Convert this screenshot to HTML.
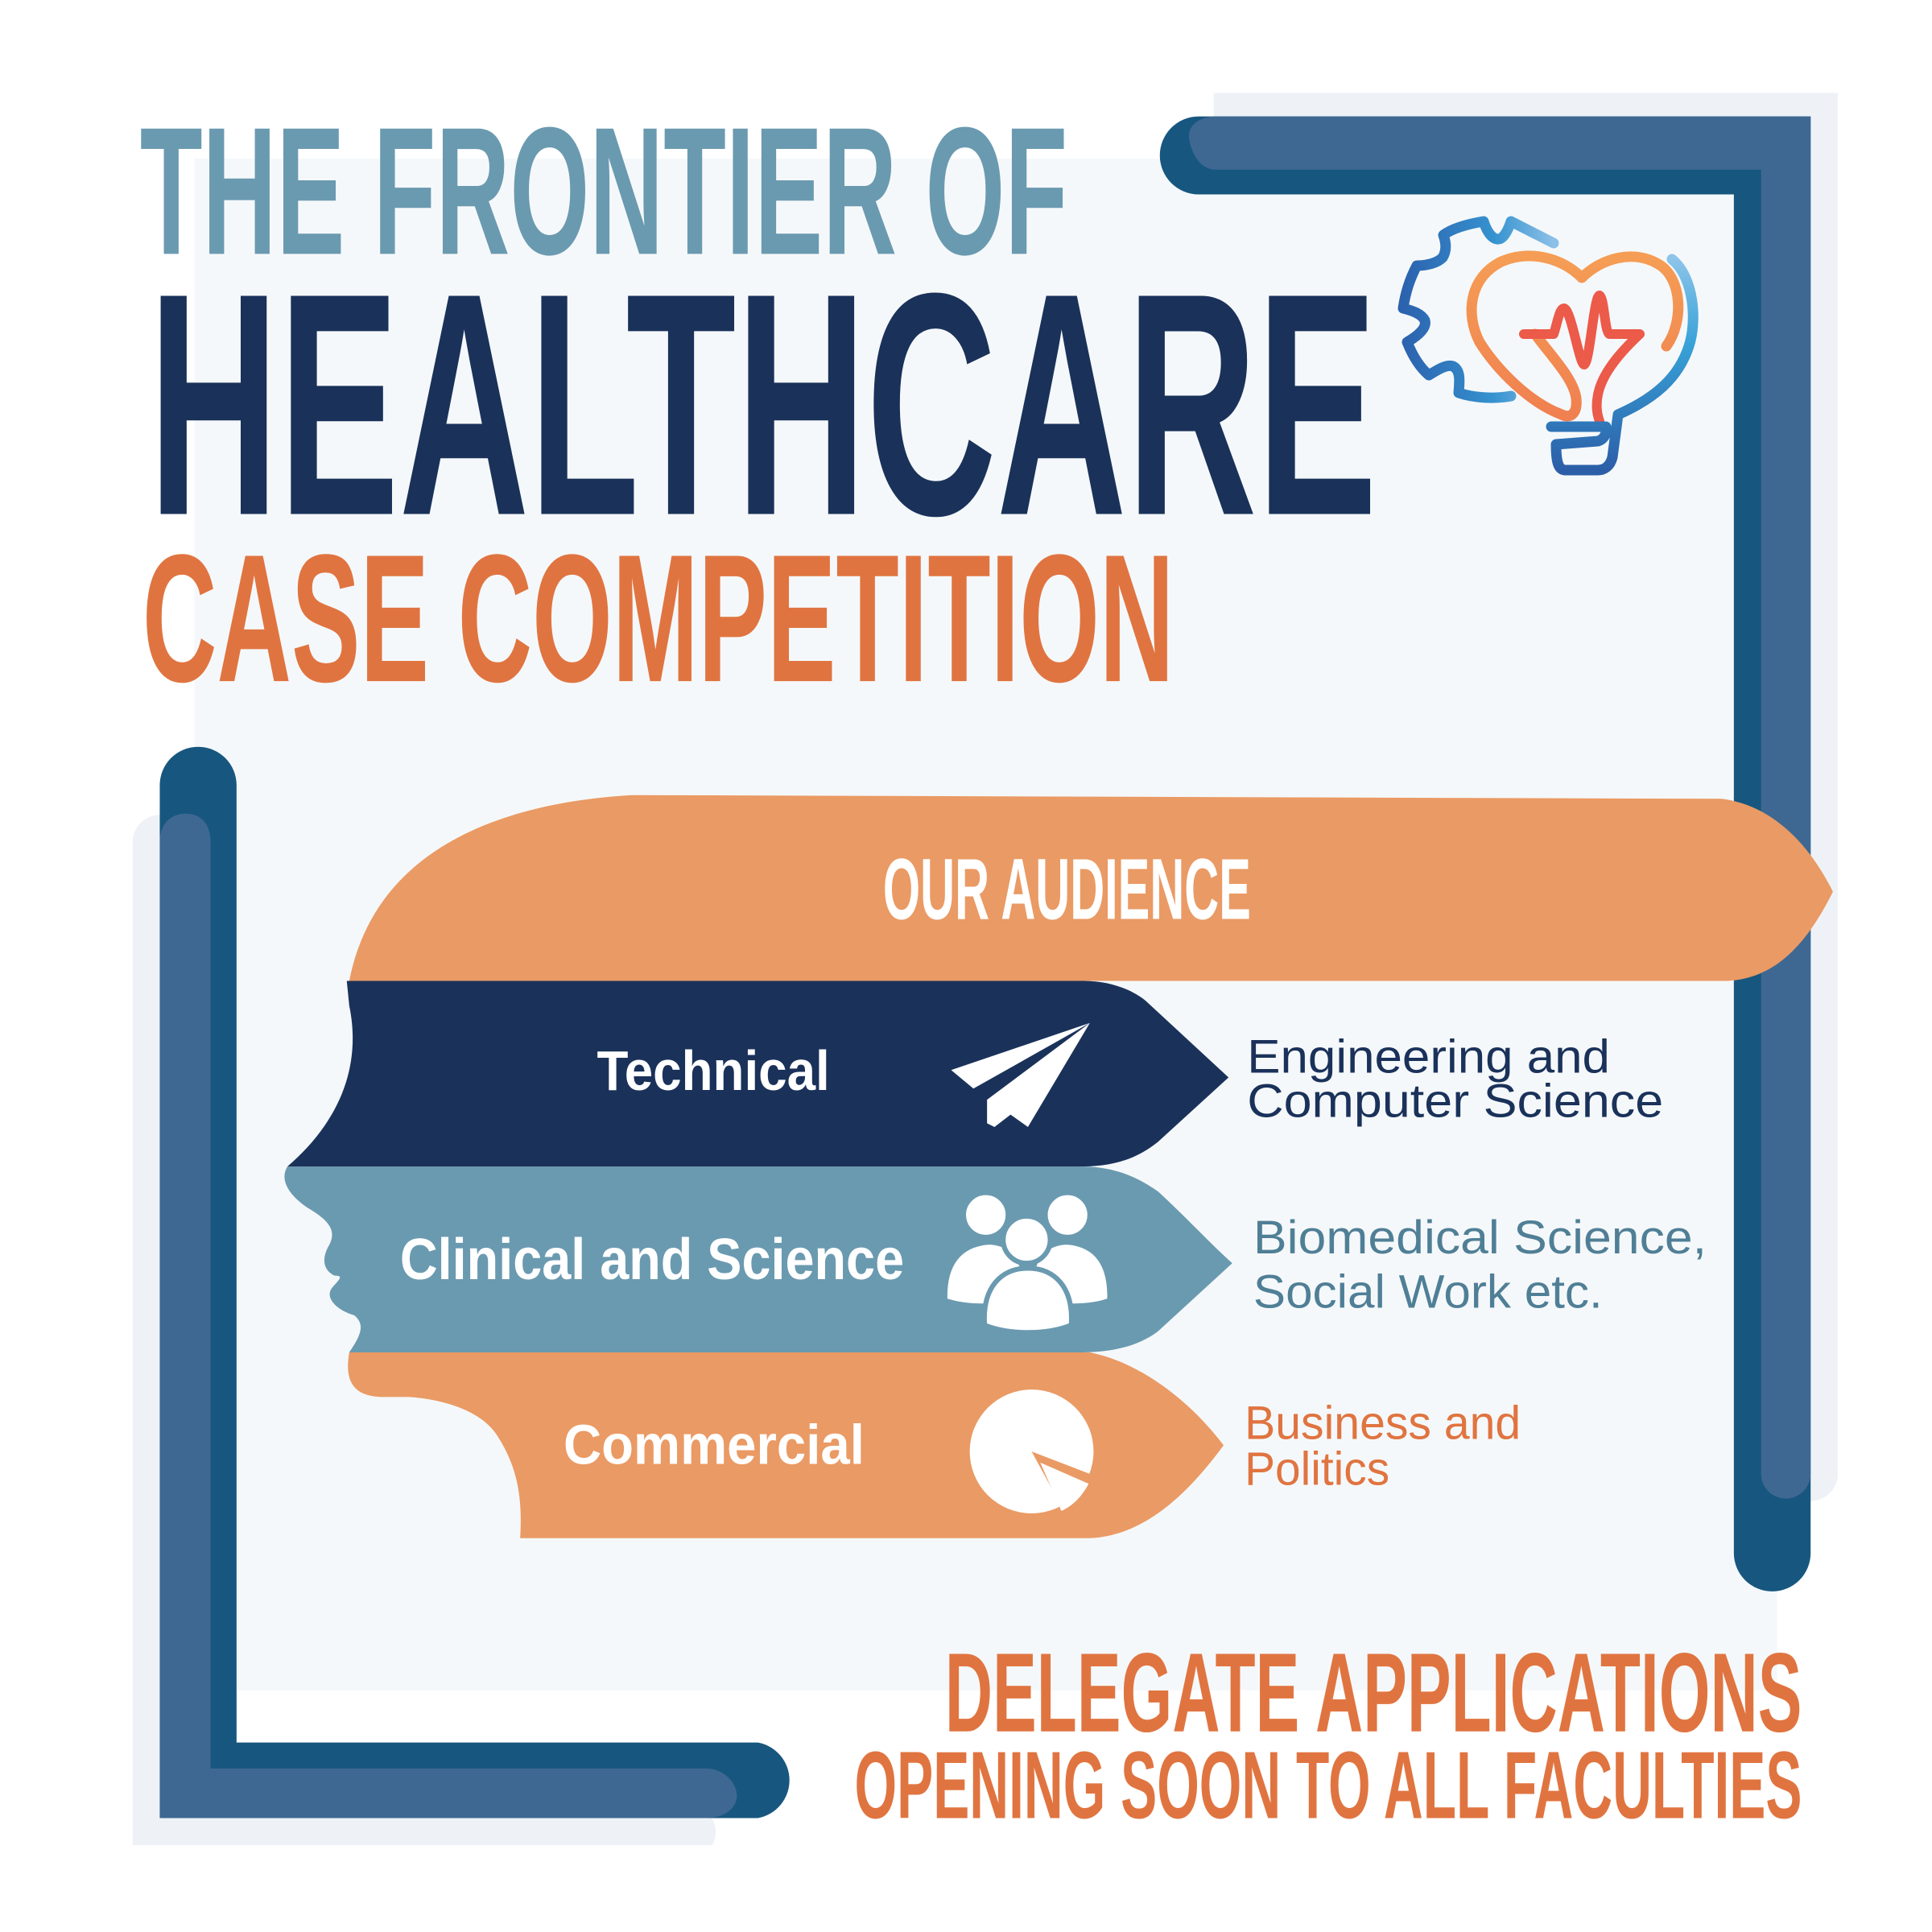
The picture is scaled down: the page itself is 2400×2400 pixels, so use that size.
<!DOCTYPE html>
<html><head><meta charset="utf-8"><style>
html,body{margin:0;padding:0;background:#fff;}
svg{display:block;}
</style></head><body>
<svg width="2400" height="2400" viewBox="0 0 2400 2400" xmlns="http://www.w3.org/2000/svg">
<defs>
<linearGradient id="gb" x1="0" y1="0" x2="1" y2="0"><stop offset="0" stop-color="#2c62ae"/><stop offset="0.6" stop-color="#3592cf"/><stop offset="1" stop-color="#8cc0e8"/></linearGradient>
<linearGradient id="gb2" x1="0" y1="0" x2="0" y2="1"><stop offset="0" stop-color="#8cc4ea"/><stop offset="0.4" stop-color="#38a2d8"/><stop offset="1" stop-color="#2c5ea8"/></linearGradient>
<linearGradient id="go" x1="0" y1="0" x2="0" y2="1"><stop offset="0" stop-color="#f59d55"/><stop offset="1" stop-color="#f08050"/></linearGradient>
</defs>
<rect width="2400" height="2400" fill="#fff"/>
<g transform="scale(1.538462)">
  <!-- light shadows -->
  <path d="M980,75 L1484,75 L1484,1190 A22,22 0 0 1 1440,1190 L1440,95 L980,95 Z" fill="#eef2f7"/>
  <path d="M107,680 A22,22 0 0 1 151,680 L151,1468 L575,1468 A22,22 0 0 1 575,1490 L107,1490 Z" fill="#eef2f7"/>
  <!-- panel -->
  <rect x="157" y="128" width="1278" height="1237" fill="#f5f8fa"/>
  <!-- top-right bracket -->
  <path d="M968,94 L1462,94 L1462,1254 A31,31 0 0 1 1400,1254 L1400,157 L968,157 A31,31 0 0 1 968,94 Z" fill="#17577f"/>
  <path d="M982,94 L1462,94 L1462,1190 A20,20 0 0 1 1422,1190 L1422,137 L982,137 C965,137 960,115 960,110 C960,100 970,94 982,94 Z" fill="#3e6892"/>
  <!-- bottom-left bracket -->
  <path d="M129,634 A31,31 0 0 1 191,634 L191,1407 L612,1407 A31,31 0 0 1 612,1468 L129,1468 Z" fill="#17577f"/>
  <path d="M129,680 C129,665 138,657 150,657 C162,657 170,665 170,680 L170,1428 L570,1428 C585,1428 595,1440 595,1450 C595,1460 585,1468 570,1468 L129,1468 Z" fill="#3e6892"/>

  <!-- titles -->
  <text x="113" y="205" font-family="Liberation Sans, sans-serif" font-weight="bold" font-size="147" fill="#6a9ab0" textLength="749" lengthAdjust="spacingAndGlyphs">THE FRONTIER OF</text>
  <text x="120" y="415" font-family="Liberation Sans, sans-serif" font-weight="bold" font-size="256" fill="#1a325a" textLength="992" lengthAdjust="spacingAndGlyphs">HEALTHCARE</text>
  <text x="115" y="550" font-family="Liberation Sans, sans-serif" font-weight="bold" font-size="147" fill="#e07440" textLength="833" lengthAdjust="spacingAndGlyphs">CASE COMPETITION</text>

  <!-- banner -->
  <path d="M282,792 C300,700 380,650 510,642 L1390,645 C1430,650 1460,680 1480,720 C1460,760 1435,790 1395,792 Z" fill="#ea9a64"/>
  <text x="713" y="742" font-family="Liberation Sans, sans-serif" font-weight="bold" font-size="70" fill="#fff" textLength="297" lengthAdjust="spacingAndGlyphs">OUR AUDIENCE</text>

  <!-- technical -->
  <path d="M280,792 L875,792 C898,792 915,800 925,808 L992,870 L935,922 C915,938 895,942 870,942 L232,942 C275,905 292,860 282,812 Z" fill="#1a325a"/>
  <text x="482" y="880" font-family="Liberation Sans, sans-serif" font-weight="bold" font-size="45" fill="#fff" textLength="188" lengthAdjust="spacingAndGlyphs">Technical</text>
  <path d="M768,864 L880,826 L786,879 Z M880,826 L830,910 L816,900 L803,910 L797,907 L797,888 Z" fill="#fff"/>

  <!-- clinical -->
  <path d="M232,942 L875,942 C905,942 925,955 935,962 C960,985 975,1002 995,1020 L935,1075 C915,1090 890,1092 870,1092 L282,1092 C290,1080 296,1070 286,1062 C272,1058 262,1048 268,1040 C274,1033 278,1030 270,1030 C260,1025 260,1015 266,1005 C272,993 265,985 248,975 C232,964 226,952 232,942 Z" fill="#6a9ab0"/>
  <text x="323" y="1033" font-family="Liberation Sans, sans-serif" font-weight="bold" font-size="47" fill="#fff" textLength="407" lengthAdjust="spacingAndGlyphs">Clinical and Science</text>
  <g fill="#fff" stroke="#6a9ab0" stroke-width="4">
    <path d="M763,1050 C762,1020 775,1005 798,1003 C815,1003 825,1015 827,1030 L827,1050 C805,1056 780,1056 763,1050 Z"/>
    <path d="M833,1050 L833,1030 C835,1015 845,1003 862,1003 C885,1005 897,1020 896,1050 C880,1056 855,1056 833,1050 Z"/>
    <circle cx="796" cy="981" r="18"/>
    <circle cx="862" cy="981" r="18"/>
    <path d="M795,1070 C793,1040 808,1024 830,1024 C852,1024 867,1040 865,1070 C845,1078 815,1078 795,1070 Z"/>
    <circle cx="829" cy="1001" r="19"/>
  </g>

  <!-- commercial -->
  <path d="M282,1092 L880,1092 C920,1100 960,1130 988,1167 C960,1205 925,1240 880,1242 L420,1242 C422,1210 418,1185 402,1160 C390,1140 360,1130 330,1128 L310,1128 C285,1128 278,1115 282,1092 Z" fill="#ea9a64"/>
  <text x="455" y="1182" font-family="Liberation Sans, sans-serif" font-weight="bold" font-size="45" fill="#fff" textLength="243" lengthAdjust="spacingAndGlyphs">Commercial</text>
  <circle cx="833" cy="1172" r="50" fill="#fff"/>
  <path d="M833,1172 L885,1192 A50,50 0 0 1 858,1218 Z" fill="#ea9a64"/>
  <path d="M840,1181 L879,1198 C874,1208 866,1216 857,1220 Z" fill="#fff"/>

  <!-- right text -->
  <g font-family="Liberation Sans, sans-serif" font-size="38">
    <text x="1007" y="866" fill="#1a325a" textLength="293" lengthAdjust="spacingAndGlyphs">Engineering and</text>
    <text x="1007" y="902" fill="#1a325a" textLength="336" lengthAdjust="spacingAndGlyphs">Computer Science</text>
    <text x="1012" y="1012" fill="#4f7f96" textLength="366" lengthAdjust="spacingAndGlyphs">Biomedical Science,</text>
    <text x="1012" y="1056" fill="#4f7f96" textLength="282" lengthAdjust="spacingAndGlyphs">Social Work etc.</text>
    <text x="1005" y="1162" fill="#e07440" textLength="223" lengthAdjust="spacingAndGlyphs">Business and</text>
    <text x="1005" y="1199" fill="#e07440" textLength="117" lengthAdjust="spacingAndGlyphs">Politics</text>
  </g>

  <!-- bottom -->
  <text x="763" y="1398" font-family="Liberation Sans, sans-serif" font-weight="bold" font-size="91" fill="#e07440" textLength="692" lengthAdjust="spacingAndGlyphs">DELEGATE APPLICATIONS</text>
  <text x="690" y="1468" font-family="Liberation Sans, sans-serif" font-weight="bold" font-size="77" fill="#e07440" textLength="765" lengthAdjust="spacingAndGlyphs">OPENING SOON TO ALL FACULTIES</text>
</g>

<!-- logo icon in real px -->
<g fill="none" stroke-linecap="round" stroke-linejoin="round" stroke-width="13">
  <path d="M1930,302 L1877,275 C1872,290 1866,298 1860,297 C1852,296 1846,285 1843,275 C1825,278 1805,283 1793,292 C1797,303 1797,312 1792,320 C1785,327 1772,330 1760,330 C1752,345 1746,362 1743,383 C1755,386 1766,390 1770,398 C1773,408 1760,418 1748,425 C1754,440 1762,455 1775,466 C1785,460 1797,452 1805,455 C1815,460 1813,475 1812,488 C1830,494 1855,496 1877,492" stroke="url(#gb)"/>
  <path d="M1907,415 C1925,440 1955,470 1958,495 C1960,515 1950,520 1940,515 C1900,500 1860,460 1838,425 C1820,390 1825,345 1865,325 C1900,310 1940,320 1965,345 C1990,320 2030,310 2060,328 C2090,345 2092,400 2070,430" stroke="url(#go)"/>
  <path d="M1893,415 L1930,415 C1935,400 1937,383 1943,383 C1952,385 1962,453 1968,453 C1975,450 1980,367 1987,367 C1993,370 1993,410 1999,415 L2037,415 C2010,440 1990,465 1985,490 C1982,505 1984,515 1987,523" stroke="#ec5a4a" stroke-width="12"/>
  <path d="M2077,322 C2105,345 2108,400 2098,430 C2085,470 2055,495 2010,515 L2003,568 C2000,580 1992,584 1985,584 L1945,584 C1936,584 1933,575 1933,552 L1985,548 C1995,545 1996,535 1995,530 L1927,530" stroke="url(#gb2)"/>
</g>
</svg>
</body></html>
